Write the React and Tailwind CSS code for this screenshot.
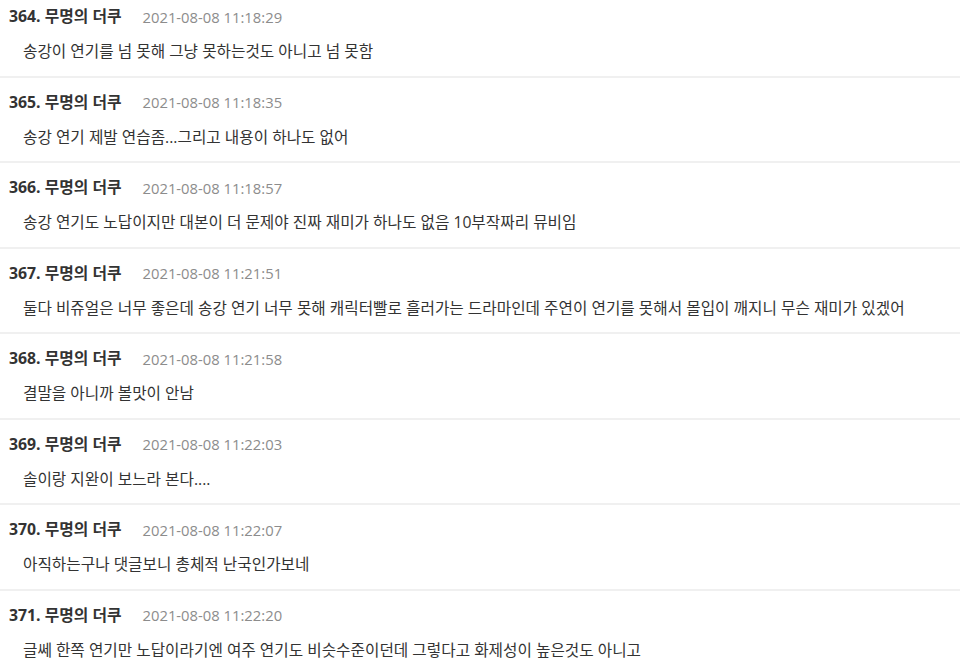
import React from "react";

const rows = [
  ["364", "2021-08-08 11:18:29", "송강이 연기를 넘 못해 그냥 못하는것도 아니고 넘 못함"],
  ["365", "2021-08-08 11:18:35", "송강 연기 제발 연습좀...그리고 내용이 하나도 없어"],
  ["366", "2021-08-08 11:18:57", "송강 연기도 노답이지만 대본이 더 문제야 진짜 재미가 하나도 없음 10부작짜리 뮤비임"],
  ["367", "2021-08-08 11:21:51", "둘다 비쥬얼은 너무 좋은데 송강 연기 너무 못해 캐릭터빨로 흘러가는 드라마인데 주연이 연기를 못해서 몰입이 깨지니 무슨 재미가 있겠어"],
  ["368", "2021-08-08 11:21:58", "결말을 아니까 볼맛이 안남"],
  ["369", "2021-08-08 11:22:03", "솔이랑 지완이 보느라 본다...."],
  ["370", "2021-08-08 11:22:07", "아직하는구나 댓글보니 총체적 난국인가보네"],
  ["371", "2021-08-08 11:22:20", "글쎄 한쪽 연기만 노답이라기엔 여주 연기도 비슷수준이던데 그렇다고 화제성이 높은것도 아니고"],
];

export default function App() {
  return (
    <div
      className="w-[960px] h-[672px] overflow-hidden bg-white"
      style={{ fontFamily: '"Open Sans", "Noto Sans CJK KR", sans-serif' }}
    >
      <div className="-mt-[8px]">
        {rows.map(([n, d, t]) => (
          <div key={n} className="border-b-2 border-[#f0f0f0] pt-[15px] pb-[12.5px]">
            <div className="flex items-center h-[20px] pl-[9px] whitespace-nowrap">
              <span className="text-[15.8px] font-bold text-[#333]">
                {n}. 무명의 더쿠
              </span>
              <span className="ml-[21px] text-[14.8px] text-[#8c8c8c]">{d}</span>
            </div>
            <div className="mt-[14px] h-[22px] flex items-center pl-[23px] text-[15.7px] text-[#333] whitespace-nowrap">
              {t}
            </div>
          </div>
        ))}
      </div>
    </div>
  );
}
